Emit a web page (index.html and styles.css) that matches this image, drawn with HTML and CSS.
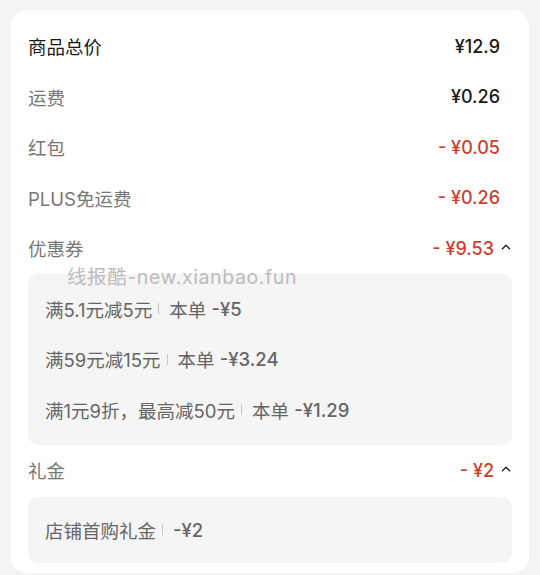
FILE: index.html
```html
<!DOCTYPE html>
<html lang="zh-CN">
<head>
    <meta charset="UTF-8">
    <meta name="viewport" content="width=device-width, initial-scale=1.0">
    <title>订单金额明细</title>
    <link rel="stylesheet" href="styles.css">
</head>
<body>
<div class="card">
    <div class="row">
        <span class="label strong">商品总价</span>
        <span class="value">¥12.9</span>
    </div>
    <div class="row">
        <span class="label">运费</span>
        <span class="value">¥0.26</span>
    </div>
    <div class="row">
        <span class="label">红包</span>
        <span class="value red">- ¥0.05</span>
    </div>
    <div class="row">
        <span class="label">PLUS免运费</span>
        <span class="value red">- ¥0.26</span>
    </div>
    <div class="row open">
        <span class="label">优惠券</span>
        <span class="value red">- ¥9.53</span>
        <svg class="caret" viewBox="0 0 10 6"><path d="M1 5.2 L5 1.2 L9 5.2" /></svg>
    </div>
    <div class="detail">
        <div class="item">满5.1元减5元<i class="sep"></i>本单 <b>-¥5</b></div>
        <div class="item">满59元减15元<i class="sep"></i>本单 <b>-¥3.24</b></div>
        <div class="item">满1元9折，最高减50元<i class="sep"></i>本单 <b>-¥1.29</b></div>
    </div>
    <div class="row open">
        <span class="label">礼金</span>
        <span class="value red">- ¥2</span>
        <svg class="caret" viewBox="0 0 10 6"><path d="M1 5.2 L5 1.2 L9 5.2" /></svg>
    </div>
    <div class="detail gift">
        <div class="item">店铺首购礼金<i class="sep"></i><b>-¥2</b></div>
    </div>
    <div class="watermark">线报酷-new.xianbao.fun</div>
</div>
</body>
</html>
```

FILE: styles.css
```css
body {
    margin: 0;
    padding: 10px 11px 0;
    background-color: #f4f4f4;
    font-family: Inter, "Noto Sans CJK SC", sans-serif;
    font-size: 18px;
    color: #777;
}
.card {
    position: relative;
    background-color: #fff;
    border-radius: 16px;
    padding: 11px 17px 10px;
}
.row {
    display: flex;
    align-items: center;
    height: 50.5px;
    padding-right: 12px;
}
.row.open {
    padding-right: 0;
}
.label {
    flex: 1;
    font-size: 18.5px;
}
.label.strong {
    color: #1a1a1a;
}
.value {
    color: #1a1a1a;
    font-weight: 500;
}
.value.red {
    color: #d13d2d;
}
.caret {
    width: 10px;
    height: 6px;
    margin: 0 1px 2px 7px;
    fill: none;
    stroke: #222;
    stroke-width: 1.4;
}
.detail {
    background-color: #f5f5f5;
    border-radius: 10px;
    padding: 10px 17px 10px;
    color: #666;
}
.detail.gift {
    margin-top: 1px;
    padding: 8px 17px 8px;
}
.item {
    display: flex;
    align-items: center;
    height: 50.5px;
    font-size: 18.5px;
    white-space: pre;
}
.item b {
    font-weight: 500;
}
.sep {
    display: inline-block;
    width: 1px;
    height: 11px;
    margin: 0 10px 0 6px;
    background-color: #c8c8c8;
}
.watermark {
    position: absolute;
    left: 56px;
    top: 251px;
    font-size: 19.5px;
    letter-spacing: 0.6px;
    color: #bcbcbc;
}
```
